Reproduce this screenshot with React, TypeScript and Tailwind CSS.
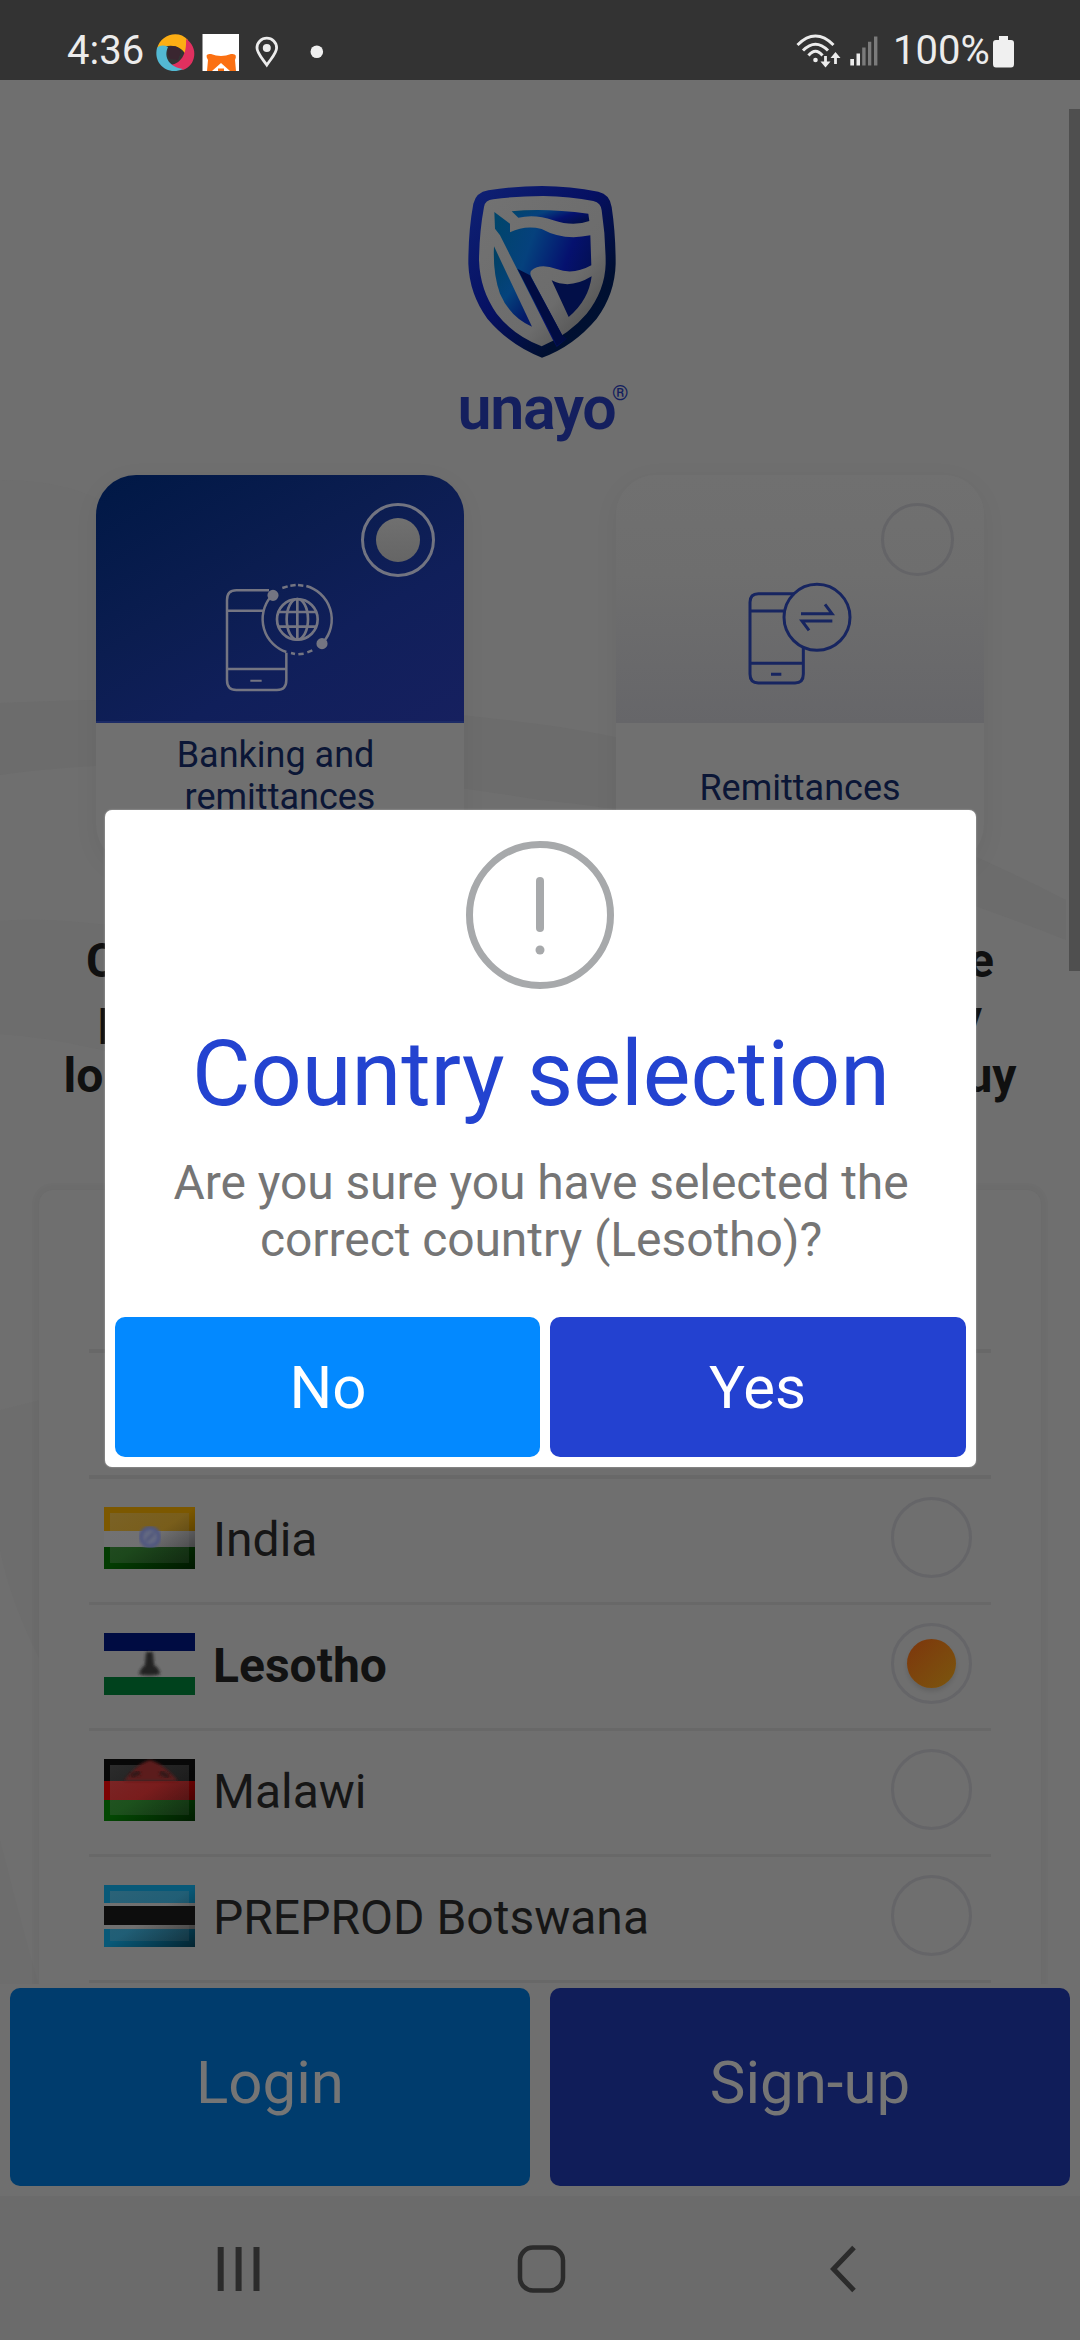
import React from "react";

function StatusBar() {
  return (
    <header className="flex h-20 shrink-0 items-center bg-[#333333] text-[#ececec]">
      <span className="ml-[67px] w-[78px] pt-[21px] text-[40px] leading-none">4:36</span>
      <svg className="ml-[5px] mt-6 h-14 w-[190px]" viewBox="150 24 190 56" fill="none">
        <path d="M157 49C160 35 178 29 188 40L186 55C180 44 169 44 157 49Z" fill="#fcae14" />
        <path d="M186 39C199 47 196 66 183 70L166 65C181 66 187 54 186 39Z" fill="#e0305f" />
        <path d="M157 48C153 64 168 76 183 69C170 67 163 58 168 47C164 45 160 45 157 48Z" fill="#53b9d3" />
        <path d="M169 47Q178 44 181 52L178 60L170 59Q166 53 169 47Z" fill="#3a2630" />
        <path d="M202.500 34H239V71H202.500Z" fill="#fff" />
        <path d="M207 71L208 60Q204 53 211 54Q221 58 231 54Q238 53 235 60L236 71H230L221 63L212 71Z" fill="#fb7012" />
        <path d="M218 71V68.500H224V71Z" fill="#fb7012" />
        <path d="M266.800 65C262 58 257 53 257 48A9.800 9.800 0 0 1 276.600 48C276.600 53 271.500 58 266.800 65Z" stroke="#ececec" strokeWidth="2.800" />
        <circle cx="266.800" cy="48" r="4" fill="#ececec" />
        <circle cx="316.800" cy="51.800" r="6.300" fill="#f0f0f0" />
      </svg>
      <svg className="ml-auto mt-6 h-14 w-[90px]" viewBox="791 24 90 56" fill="none">
        <g stroke="#ececec" strokeWidth="3">
          <path d="M797.500 45Q815.500 27 833.500 45" />
          <path d="M803 50.500Q815.500 38 828 50.500" />
          <path d="M808.500 55.500Q815.500 47 822.500 55.500" />
        </g>
        <circle cx="815.500" cy="60" r="2.300" fill="#ececec" />
        <path d="M825.500 56V63M835.500 64V56" stroke="#ececec" strokeWidth="2.800" />
        <path d="M820.500 61.500H830.500L825.500 67.500ZM830.500 58H840.500L835.500 52Z" fill="#ececec" />
        <path d="M850.300 59H854V65.500H850.300ZM856.500 53.500H860V65.500H856.500Z" fill="#ececec" />
        <path d="M862.200 47.500H865.600V65.500H862.200ZM868 41.700H871.300V65.500H868ZM874 36.500H877.400V65.500H874Z" fill="#7b7b7b" />
      </svg>
      <span className="ml-[12px] w-[97px] pt-[21px] text-[40px] leading-none">100%</span>
      <svg className="mr-[65px] ml-[2px] mt-6 h-14 w-[23px]" viewBox="992 24 23 56">
        <path d="M999 36H1008V40H1011Q1014 40 1014 43V64Q1014 67.500 1011 67.500H996Q993 67.500 993 64V43Q993 40 996 40H999Z" fill="#f0f0f0" />
      </svg>
    </header>
  );
}

function Backdrop() {
  return (
    <svg className="absolute inset-0 h-full w-full" viewBox="0 80 1080 2116" preserveAspectRatio="none">
      <path d="M0 480Q60 480 100 500V540H0Z" fill="#6e6e6e" />
      <path d="M0 703Q300 690 560 727Q800 765 1066 900V940Q760 820 540 800Q200 745 0 775Z" fill="#6c6c6c" />
      <path d="M0 921Q70 915 200 940V1080Q90 1040 0 1034Z" fill="#6d6d6d" />
      <path d="M0 1410L40 1400V1660Q10 1600 0 1550Z" fill="#6d6d6d" />
      <path d="M0 1840Q20 1920 40 1990V2060H0Z" fill="#6d6d6d" />
    </svg>
  );
}

function Shield() {
  return (
    <svg className="ml-1 h-[172px] w-[148px]" viewBox="115 77 442 516">
      <defs>
        <linearGradient id="rim" x1="0" y1="0" x2="1" y2="1">
          <stop offset="0" stopColor="#0f2275" />
          <stop offset=".45" stopColor="#061062" />
          <stop offset=".75" stopColor="#000f30" />
          <stop offset="1" stopColor="#001535" />
        </linearGradient>
        <linearGradient id="field" x1="0" y1=".1" x2="1" y2=".6">
          <stop offset="0" stopColor="#00456b" />
          <stop offset=".35" stopColor="#05417d" />
          <stop offset=".7" stopColor="#05116f" />
          <stop offset="1" stopColor="#020f4c" />
        </linearGradient>
        <linearGradient id="leftField" x1="0" y1="0" x2=".6" y2="1">
          <stop offset="0" stopColor="#004060" />
          <stop offset=".6" stopColor="#04437d" />
          <stop offset="1" stopColor="#041a68" />
        </linearGradient>
        <linearGradient id="silver" x1="0" y1="0" x2="1" y2="1">
          <stop offset="0" stopColor="#727272" />
          <stop offset=".65" stopColor="#6c6c6c" />
          <stop offset="1" stopColor="#454545" />
        </linearGradient>
      </defs>
      <path d="M130 130Q138 96 175 90Q260 77 336 77Q420 78 505 94Q540 102 545 140Q557 220 557 310Q555 400 500 475Q430 558 336 592Q240 555 172 475Q118 400 115 310Q115 210 130 130Z" fill="url(#rim)" />
      <path d="M162 140Q165 119 190 117Q260 107 340 107Q420 108 490 122Q513 128 515 150Q527 230 527 310Q525 390 470 460Q420 520 335 558Q250 525 200 460Q150 390 147 300Q148 215 162 140Z" fill="url(#silver)" />
      <path d="M245 153Q340 142 475 160L478 182Q430 200 370 180Q315 160 265 172Z" fill="url(#field)" />
      <path d="M193 155L240 190V216Q285 194 335 206Q400 242 481 225L484 315Q430 345 380 326Q330 308 305 330Q297 337 305 352L398 527L410 535L380 560L370 541L210 225L195 205Z" fill="url(#field)" />
      <path d="M300 345L398 527L410 535L380 556L373 540L262 325Z" fill="#010c42" />
      <path d="M192 258L306 499Q240 470 210 400Q188 340 192 258Z" fill="url(#leftField)" />
      <path d="M365 360Q420 388 485 348Q476 420 416 470Z" fill="#020f48" />
    </svg>
  );
}

function Brand() {
  return (
    <div className="flex flex-col items-center pt-[106px]">
      <Shield />
      <div className="relative mr-[7px] mt-[20px] text-[61px] font-semibold leading-[61px] tracking-[-1.4px] text-[#141f5e]">
        unayo
        <span className="absolute -right-[13px] top-[5px] text-[21px] leading-[21px] tracking-normal">®</span>
      </div>
    </div>
  );
}

function BankingIcon() {
  return (
    <svg className="absolute left-[127px] top-[105px] h-[114px] w-[114px]" viewBox="490 360 342 342" fill="none" stroke="#747582" strokeWidth="7.500">
      <path d="M628 391H530Q502 391 502 420V660Q502 690 530 690H652Q680 690 680 660V578M502 452H612M502 627H680" />
      <path d="M572 662H606" strokeWidth="6" />
      <path d="M632 412A104 104 0 0 0 680 576M740 378A104 104 0 0 1 792 545" />
      <path d="M668 384L684 379M692 377L708 375M715 375L731 377M694 579L706 582M716 583L732 581M743 577L758 571" />
      <circle cx="640" cy="406" r="13" fill="#747582" />
      <circle cx="787" cy="551" r="13" fill="#747582" />
      <g strokeWidth="8">
        <circle cx="713" cy="478" r="61" />
        <ellipse cx="713" cy="478" rx="32" ry="61" />
        <path d="M713 417V539M656 456H770M656 500H770" />
      </g>
    </svg>
  );
}

function RemittanceIcon() {
  return (
    <svg className="absolute left-[127px] top-[105px] h-[114px] w-[114px]" viewBox="490 360 342 342" fill="none" stroke="#172560" strokeWidth="9">
      <path d="M645 401H536Q511 401 511 427V642Q511 669 536 669H646Q671 669 671 642V560M511 453H612M511 610H671" />
      <path d="M574 643H605" />
      <circle cx="712" cy="472" r="99" />
      <path d="M664 461H757L736 433M758 483H667L688 511" />
    </svg>
  );
}

function Options() {
  return (
    <div className="mx-auto mt-[36px] flex w-[888px] justify-between text-center text-[36px] leading-[41.700px] text-[#0b1636]">
      <section className="h-[390px] w-[368px] overflow-hidden rounded-[40px] bg-[#707070] shadow-[0_6px_26px_rgba(0,0,0,0.05)]">
        <div className="relative h-[248px] border-b-2 border-[#1c2b66] bg-[linear-gradient(150deg,#001845_0%,#0b1d50_40%,#101f5a_65%,#16205f_100%)]">
          <BankingIcon />
          <div className="absolute left-[265px] top-[28px] flex h-[74px] w-[74px] items-center justify-center rounded-full border-[3px] border-[#727481]">
            <div className="h-11 w-11 rounded-full bg-gradient-to-b from-[#707070] to-[#656565]" />
          </div>
        </div>
        <div className="pt-[12px]">
          Banking and&nbsp;
          <br />
          remittances
        </div>
      </section>
      <section className="h-[390px] w-[368px] overflow-hidden rounded-[40px] bg-[#707070] shadow-[0_6px_26px_rgba(0,0,0,0.05)]">
        <div className="relative h-[248px] bg-[linear-gradient(180deg,#707070_0%,#6e6e6e_40%,#666669_100%)]">
          <RemittanceIcon />
          <div className="absolute left-[265px] top-[28px] h-[73px] w-[73px] rounded-full border-[3px] border-[#646467]" />
        </div>
        <div className="pt-[45px]">Remittances</div>
      </section>
    </div>
  );
}

function Headline() {
  return (
    <div className="mt-[67px] flex flex-col items-center text-[48px] font-bold leading-[57.300px] text-[#101010]">
      <div className="flex w-[908px] justify-between">
        <span>C</span>
        <span>e</span>
      </div>
      <div className="flex w-[884px] justify-between">
        <span>p</span>
        <span>y</span>
      </div>
      <div className="flex w-[953px] justify-between">
        <span>lo</span>
        <span>uy</span>
      </div>
    </div>
  );
}

type Country = { name: string; flag: React.ReactNode; selected?: boolean };

const gloss = (
  <>
    <rect x="0" y="0" width="91" height="62" fill="url(#edge)" />
    <rect x="6" y="6" width="79" height="50" fill="url(#gloss)" />
  </>
);

const countries: Country[] = [
  {
    name: "India",
    flag: (
      <>
        <path d="M0 0H91V24H0Z" fill="#7c5800" />
        <path d="M0 24H91V40H0Z" fill="#717173" />
        <path d="M0 40H91V62H0Z" fill="#033c02" />
        {gloss}
        <g filter="url(#soft)">
          <circle cx="46" cy="30" r="9" fill="#646981" stroke="#4f5680" strokeWidth="4" />
          <path d="M42 34L50 26" stroke="#484e78" strokeWidth="2" />
        </g>
      </>
    ),
  },
  {
    name: "Lesotho",
    selected: true,
    flag: (
      <>
        <path d="M0 0H91V62H0Z" fill="#6f6f6f" />
        <path d="M0 0H91V18H0Z" fill="#000c42" />
        <path d="M0 44H91V62H0Z" fill="#00421d" />
        <path d="M42 19H49L50 32Q56 36 56 41Q45 44 35 41Q36 36 41 32Z" fill="#202020" filter="url(#soft)" />
      </>
    ),
  },
  {
    name: "Malawi",
    flag: (
      <>
        <path d="M0 0H91V22H0Z" fill="#080808" />
        <path d="M0 22H91V41H0Z" fill="#7c0303" />
        <path d="M0 41H91V62H0Z" fill="#034803" />
        {gloss}
        <path d="M20 22Q34 4 46 1Q58 4 74 22Z" fill="#5c1a1b" filter="url(#soft)" />
        <path d="M27 17L36 13M56 13L65 18" stroke="#331515" strokeWidth="5" filter="url(#soft)" />
      </>
    ),
  },
  {
    name: "PREPROD Botswana",
    flag: (
      <>
        <path d="M0 0H91V62H0Z" fill="#085978" />
        <path d="M0 18H91V44H0Z" fill="#707070" />
        {gloss}
        <path d="M0 21H91V40H0Z" fill="#0d0d0d" />
      </>
    ),
  },
];

function Countries() {
  return (
    <section className="mx-auto mt-[86px] h-[900px] w-[1002px] rounded-[14px] bg-[#6f6f6f] px-[50px] pt-[37px] shadow-[0_0_0_7px_rgba(0,0,0,0.015),0_0_9px_rgba(0,0,0,0.03)]">
      <div className="h-[126px] border-b-4 border-[#686868]" />
      <div className="h-[126px] border-b-4 border-[#686868]" />
      {countries.map((c) => (
        <div key={c.name} className="flex h-[126px] items-center border-b-[3px] border-[#686868] pl-[15px] pr-[19px]">
          <svg className="-mt-1 h-[62px] w-[91px]" viewBox="0 0 91 62">
            {c.flag}
          </svg>
          <span className={c.selected ? "ml-[18px] text-[48px] font-bold leading-none text-[#121212]" : "ml-[18px] text-[48px] leading-none text-[#161616]"}>
            {c.name}
          </span>
          <div className="ml-auto -mt-[5px] flex h-[81px] w-[81px] items-center justify-center rounded-full border-[3px] border-[#656568]">
            {c.selected && <div className="h-[49px] w-[49px] rounded-full bg-gradient-to-br from-[#7d350c] to-[#7a560e] shadow-[0_3px_4px_rgba(0,0,0,0.12)]" />}
          </div>
        </div>
      ))}
    </section>
  );
}

function Dialog() {
  return (
    <div role="dialog" className="absolute left-[104.500px] top-[809.500px] flex h-[657px] w-[871px] flex-col items-center rounded-[7px] bg-white p-[10px] shadow-[0_0_2px_rgba(255,255,255,0.5)]">
      <svg className="mt-5 h-[150px] w-[150px] shrink-0" viewBox="0 0 150 150" fill="none" stroke="#a7a9ab">
        <circle cx="75" cy="75" r="70.500" strokeWidth="7" />
        <path d="M75 41V88" strokeWidth="8" strokeLinecap="round" />
        <circle cx="75" cy="110" r="4.500" fill="#a7a9ab" stroke="none" />
      </svg>
      <h1 className="ml-[2px] mt-[40px] whitespace-nowrap text-[90px] leading-[90px] text-[#2343d0]">Country selection</h1>
      <p className="ml-[2px] mt-[34px] whitespace-nowrap text-center text-[48px] leading-[57.300px] tracking-[-0.08px] text-[#757575]">
        Are you sure you have selected the
        <br />
        correct country (Lesotho)?
      </p>
      <div className="mt-auto flex w-full justify-between text-[60px] leading-none text-white">
        <button className="h-[140px] w-[425px] rounded-[10px] bg-[#0389ff] pl-[2px] pt-[3px]">No</button>
        <button className="h-[140px] w-[416px] rounded-[10px] bg-[#2341d0] pt-[3px]">Yes</button>
      </div>
    </div>
  );
}

function NavBar() {
  return (
    <nav className="flex h-36 shrink-0 items-center bg-[#6b6b6b] pl-[214px]">
      <svg className="h-[50px] w-[50px]" viewBox="0 0 50 50" stroke="#2b2b2b" strokeWidth="6">
        <path d="M6.700 4V48M24.600 4V48M42.500 4V48" />
      </svg>
      <svg className="ml-[252px] h-[50px] w-[50px]" viewBox="0 0 50 50" fill="none" stroke="#2b2b2b" strokeWidth="4.500">
        <rect x="4" y="4.500" width="43" height="43" rx="13" />
      </svg>
      <svg className="ml-[264px] h-[50px] w-[30px]" viewBox="0 0 30 50" fill="none" stroke="#2b2b2b" strokeWidth="5">
        <path d="M24 4.500L3.500 26L24 47.500" />
      </svg>
    </nav>
  );
}

export default function App() {
  return (
    <div className="relative flex h-[2340px] w-[1080px] flex-col overflow-hidden bg-[#6f6f6f] font-['Roboto',sans-serif]">
      <svg className="absolute h-0 w-0">
        <defs>
          <linearGradient id="edge" x1="0" y1="0" x2="1" y2="1">
            <stop offset=".5" stopColor="#000" stopOpacity="0" />
            <stop offset="1" stopColor="#000" stopOpacity=".6" />
          </linearGradient>
          <linearGradient id="gloss" x1="0" y1="0" x2="1" y2="1">
            <stop offset="0" stopColor="#777" stopOpacity=".32" />
            <stop offset="1" stopColor="#666" stopOpacity=".16" />
          </linearGradient>
          <filter id="soft">
            <feGaussianBlur stdDeviation="1.500" />
          </filter>
        </defs>
      </svg>
      <StatusBar />
      <main className="relative h-[2116px] shrink-0 overflow-hidden">
        <Backdrop />
        <div className="relative">
          <Brand />
          <Options />
          <Headline />
          <Countries />
        </div>
        <div className="absolute right-0 top-[29px] h-[862px] w-[11px] bg-[#4f4f4f]" />
        <div className="absolute inset-x-0 bottom-0 flex h-[212px] justify-between bg-[#6f6f6f] px-[10px] pb-[10px] pt-1 text-[60px] leading-none text-[#757575]">
          <button className="w-[520px] rounded-[10px] bg-[#003c6d] pb-[9px]">Login</button>
          <button className="w-[520px] rounded-[10px] bg-[#101d59] pb-[9px]">Sign-up</button>
        </div>
      </main>
      <NavBar />
      <Dialog />
    </div>
  );
}
